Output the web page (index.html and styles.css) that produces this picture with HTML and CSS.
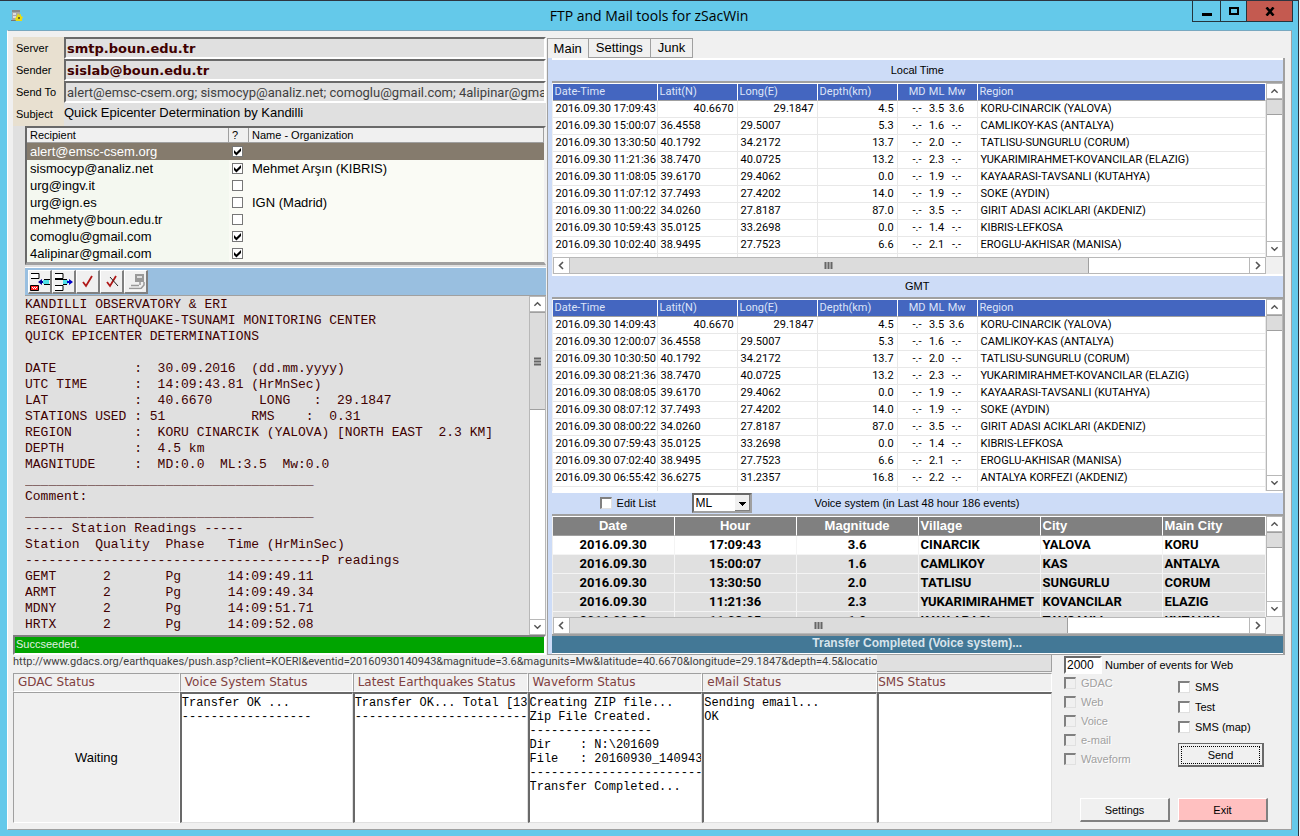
FILE: index.html
```html
<!DOCTYPE html>
<html lang="en">
<head>
<meta charset="utf-8">
<title>FTP and Mail tools for zSacWin</title>
<link rel="stylesheet" href="styles.css">
</head>
<body>
<svg class="defs" width="0" height="0" aria-hidden="true">
  <symbol id="up" viewBox="0 0 9 9"><path d="M1 6.5 4.5 3 8 6.5" fill="none" stroke="#555" stroke-width="1.6"/></symbol>
  <symbol id="down" viewBox="0 0 9 9"><path d="M1 2.5 4.5 6 8 2.5" fill="none" stroke="#555" stroke-width="1.6"/></symbol>
  <symbol id="left" viewBox="0 0 9 9"><path d="M6 1 2.500 4.500 6 8" fill="none" stroke="#555" stroke-width="1.6"/></symbol>
  <symbol id="right" viewBox="0 0 9 9"><path d="M3 1 6.500 4.500 3 8" fill="none" stroke="#555" stroke-width="1.6"/></symbol>
  <symbol id="grip" viewBox="0 0 9 9"><path d="M1 1.500H8M1 4.500H8M1 7.500H8" stroke="#666" stroke-width="2"/></symbol>
</svg>
<div class="window">
  <header class="titlebar">
    <svg class="app-icon" width="12" height="13" viewBox="0 0 12 13"><path d="M1 1h8v10H1z" fill="#a8a8a8"/><path d="M1 1h8v2H1z" fill="#888"/><path d="M2 4h3v2H2zM2 7h3v2H2z" fill="#ddd"/><path d="M0 11h6v1H0z" fill="#777"/><path d="M7 4l1 2 2-1v2l2 1-1 2v2H5l-1-2 1-2 1-1z" fill="#e8dc10"/><path d="M7 8h2v2H7z" fill="#777020"/></svg>
    <h1>FTP and Mail tools for zSacWin</h1>
    <div class="caption">
      <button class="cap min" aria-label="Minimize"><svg width="10" height="9" viewBox="0 0 10 9"><path d="M0 6h10v3H0z"/></svg></button>
      <button class="cap max" aria-label="Maximize"><svg width="10" height="8" viewBox="0 0 10 8"><path d="M1 1h8v6H1z" fill="none" stroke="#000" stroke-width="2"/></svg></button>
      <button class="cap close" aria-label="Close"><svg width="10" height="9" viewBox="0 0 10 9"><path d="M1.500 0.500l7 8M8.500 0.500l-7 8" stroke="#000" stroke-width="2.600"/></svg></button>
    </div>
  </header>
  <main class="client">
    <div class="upper">
      <section class="mail">
        <div class="fields">
          <label for="server">Server</label><input id="server" class="field strong" value="smtp.boun.edu.tr">
          <label for="sender">Sender</label><input id="sender" class="field strong" value="sislab@boun.edu.tr">
          <label for="sendto">Send To</label><input id="sendto" class="field narrow" value="alert@emsc-csem.org; sismocyp@analiz.net; comoglu@gmail.com; 4alipinar@gmail.com">
          <label for="subject">Subject</label><input id="subject" class="field plain" value="Quick Epicenter Determination by Kandilli">
        </div>
        <div class="mail-body">
          <div class="recipients">
            <table>
              <colgroup><col class="r-mail"><col class="r-on"><col></colgroup>
              <thead><tr><th>Recipient</th><th>?</th><th>Name - Organization</th></tr></thead>
              <tbody>
                <tr class="selected"><td>alert@emsc-csem.org</td><td><input type="checkbox" class="tick" aria-label="alert@emsc-csem.org" checked></td><td></td></tr>
                <tr><td>sismocyp@analiz.net</td><td><input type="checkbox" class="tick" aria-label="sismocyp@analiz.net" checked></td><td>Mehmet Arşın (KIBRIS)</td></tr>
                <tr><td>urg@ingv.it</td><td><input type="checkbox" class="tick" aria-label="urg@ingv.it"></td><td></td></tr>
                <tr><td>urg@ign.es</td><td><input type="checkbox" class="tick" aria-label="urg@ign.es"></td><td>IGN (Madrid)</td></tr>
                <tr><td>mehmety@boun.edu.tr</td><td><input type="checkbox" class="tick" aria-label="mehmety@boun.edu.tr"></td><td></td></tr>
                <tr><td>comoglu@gmail.com</td><td><input type="checkbox" class="tick" aria-label="comoglu@gmail.com" checked></td><td></td></tr>
                <tr><td>4alipinar@gmail.com</td><td><input type="checkbox" class="tick" aria-label="4alipinar@gmail.com" checked></td><td></td></tr>
              </tbody>
            </table>
          </div>
          <div class="toolbar">
            <button class="tool" aria-label="Insert recipient"><svg width="20" height="20" viewBox="0 0 20 20"><path d="M1 1.500h8v5H1" fill="#fff" stroke="#000"/><path d="M.5 13.500h8v5h-8z" fill="#f22" stroke="#000"/><path d="M2 15h1v1H2zM4 15h1v1H4zM6 15h1v1H6zM3 16h1v1H3zM5 16h1v1H5z" fill="#fff"/><path d="M8 10l4-3v2h2v2h-2v2z" fill="#00009a"/><path d="M14 7.500h6M14 12.500h6" stroke="#000"/><path d="M13 8h6v4h-6z" fill="#4fdfe6"/></svg></button>
            <button class="tool" aria-label="Remove recipient"><svg width="20" height="20" viewBox="0 0 20 20"><path d="M1 1.500h8v5H1M1 13.500h8v5H1" fill="#fff" stroke="#000"/><path d="M1 7.500h12M9 12.500h4" stroke="#000"/><path d="M9 8h5v4H9z" fill="#4fdfe6"/><path d="M19 10l-4-3v2h-2v2h2v2z" fill="#0000c8"/></svg></button>
            <button class="tool" aria-label="Check all"><svg width="18" height="18" viewBox="0 0 18 18"><path d="M4 9l3 4 6-10" fill="none" stroke="#b01818" stroke-width="1.800"/></svg></button>
            <button class="tool" aria-label="Uncheck all"><svg width="18" height="18" viewBox="0 0 18 18"><path d="M4 9l3 4 6-10" fill="none" stroke="#b01818" stroke-width="1.800"/><path d="M7 4l8 9" stroke="#222"/></svg></button>
            <button class="tool" aria-label="Print"><svg width="18" height="18" viewBox="0 0 18 18"><path d="M8 1h9v8H8z" fill="#999"/><path d="M10 3h5v2h-5z" fill="#ddd"/><path d="M13 9v3M2 15.500h12l3-3.500V9M4 12.500h8" fill="none" stroke="#999" stroke-width="1.500"/><path d="M2 17h13" stroke="#fff"/></svg></button>
          </div>
          <div class="report">
            <textarea readonly aria-label="Report">KANDILLI OBSERVATORY &amp; ERI
REGIONAL EARTHQUAKE-TSUNAMI MONITORING CENTER
QUICK EPICENTER DETERMINATIONS

DATE          :  30.09.2016  (dd.mm.yyyy)
UTC TIME      :  14:09:43.81 (HrMnSec)
LAT           :  40.6670      LONG   :  29.1847
STATIONS USED : 51           RMS    :  0.31
REGION        :  KORU CINARCIK (YALOVA) [NORTH EAST  2.3 KM]
DEPTH         :  4.5 km
MAGNITUDE     :  MD:0.0  ML:3.5  Mw:0.0
_____________________________________
Comment:
_____________________________________
----- Station Readings -----
Station  Quality  Phase   Time (HrMinSec)
--------------------------------------P readings
GEMT      2       Pg      14:09:49.11
ARMT      2       Pg      14:09:49.34
MDNY      2       Pg      14:09:51.71
HRTX      2       Pg      14:09:52.08</textarea>
            <div class="vbar tall"><svg class="arrow"><use href="#up"/></svg><div class="thumb"><svg><use href="#grip"/></svg></div><svg class="arrow end"><use href="#down"/></svg></div>
          </div>
        </div>
        <p class="success">Succseeded.</p>
      </section>

      <section class="lists">
        <nav class="tabs"><button class="tab active">Main</button><button class="tab">Settings</button><button class="tab">Junk</button></nav>
        <div class="page">
          <h2 class="band">Local Time</h2>
          <div class="grid local">
            <div class="view">
              <table class="quakes">
                <colgroup><col class="c-time"><col class="c-num"><col class="c-num"><col class="c-num"><col class="c-md"><col class="c-ml"><col class="c-mw"><col></colgroup>
                <thead><tr><th>Date-Time</th><th>Latit(N)</th><th>Long(E)</th><th>Depth(km)</th><th>MD</th><th>ML</th><th>Mw</th><th>Region</th></tr></thead>
                <tbody>
                  <tr class="latest"><td>2016.09.30 17:09:43</td><td>40.6670</td><td>29.1847</td><td>4.5</td><td>-.-</td><td>3.5</td><td>3.6</td><td>KORU-CINARCIK (YALOVA)</td></tr>
                  <tr><td>2016.09.30 15:00:07</td><td>36.4558</td><td>29.5007</td><td>5.3</td><td>-.-</td><td>1.6</td><td>-.-</td><td>CAMLIKOY-KAS (ANTALYA)</td></tr>
                  <tr><td>2016.09.30 13:30:50</td><td>40.1792</td><td>34.2172</td><td>13.7</td><td>-.-</td><td>2.0</td><td>-.-</td><td>TATLISU-SUNGURLU (CORUM)</td></tr>
                  <tr><td>2016.09.30 11:21:36</td><td>38.7470</td><td>40.0725</td><td>13.2</td><td>-.-</td><td>2.3</td><td>-.-</td><td>YUKARIMIRAHMET-KOVANCILAR (ELAZIG)</td></tr>
                  <tr><td>2016.09.30 11:08:05</td><td>39.6170</td><td>29.4062</td><td>0.0</td><td>-.-</td><td>1.9</td><td>-.-</td><td>KAYAARASI-TAVSANLI (KUTAHYA)</td></tr>
                  <tr><td>2016.09.30 11:07:12</td><td>37.7493</td><td>27.4202</td><td>14.0</td><td>-.-</td><td>1.9</td><td>-.-</td><td>SOKE (AYDIN)</td></tr>
                  <tr><td>2016.09.30 11:00:22</td><td>34.0260</td><td>27.8187</td><td>87.0</td><td>-.-</td><td>3.5</td><td>-.-</td><td>GIRIT ADASI ACIKLARI (AKDENIZ)</td></tr>
                  <tr><td>2016.09.30 10:59:43</td><td>35.0125</td><td>33.2698</td><td>0.0</td><td>-.-</td><td>1.4</td><td>-.-</td><td>KIBRIS-LEFKOSA</td></tr>
                  <tr><td>2016.09.30 10:02:40</td><td>38.9495</td><td>27.7523</td><td>6.6</td><td>-.-</td><td>2.1</td><td>-.-</td><td>EROGLU-AKHISAR (MANISA)</td></tr>
                  <tr><td></td><td></td><td></td><td></td><td></td><td></td><td></td><td></td></tr>
                </tbody>
              </table>
            </div>
            <div class="vbar"><svg class="arrow"><use href="#up"/></svg><div class="thumb"></div><svg class="arrow end"><use href="#down"/></svg></div>
            <div class="hbar wide"><svg class="arrow"><use href="#left"/></svg><div class="thumb"><svg><use href="#grip"/></svg></div><svg class="arrow end"><use href="#right"/></svg></div>
          </div>
          <h2 class="band">GMT</h2>
          <div class="grid gmt">
            <div class="view">
              <table class="quakes">
                <colgroup><col class="c-time"><col class="c-num"><col class="c-num"><col class="c-num"><col class="c-md"><col class="c-ml"><col class="c-mw"><col></colgroup>
                <thead><tr><th>Date-Time</th><th>Latit(N)</th><th>Long(E)</th><th>Depth(km)</th><th>MD</th><th>ML</th><th>Mw</th><th>Region</th></tr></thead>
                <tbody>
                  <tr class="latest"><td>2016.09.30 14:09:43</td><td>40.6670</td><td>29.1847</td><td>4.5</td><td>-.-</td><td>3.5</td><td>3.6</td><td>KORU-CINARCIK (YALOVA)</td></tr>
                  <tr><td>2016.09.30 12:00:07</td><td>36.4558</td><td>29.5007</td><td>5.3</td><td>-.-</td><td>1.6</td><td>-.-</td><td>CAMLIKOY-KAS (ANTALYA)</td></tr>
                  <tr><td>2016.09.30 10:30:50</td><td>40.1792</td><td>34.2172</td><td>13.7</td><td>-.-</td><td>2.0</td><td>-.-</td><td>TATLISU-SUNGURLU (CORUM)</td></tr>
                  <tr><td>2016.09.30 08:21:36</td><td>38.7470</td><td>40.0725</td><td>13.2</td><td>-.-</td><td>2.3</td><td>-.-</td><td>YUKARIMIRAHMET-KOVANCILAR (ELAZIG)</td></tr>
                  <tr><td>2016.09.30 08:08:05</td><td>39.6170</td><td>29.4062</td><td>0.0</td><td>-.-</td><td>1.9</td><td>-.-</td><td>KAYAARASI-TAVSANLI (KUTAHYA)</td></tr>
                  <tr><td>2016.09.30 08:07:12</td><td>37.7493</td><td>27.4202</td><td>14.0</td><td>-.-</td><td>1.9</td><td>-.-</td><td>SOKE (AYDIN)</td></tr>
                  <tr><td>2016.09.30 08:00:22</td><td>34.0260</td><td>27.8187</td><td>87.0</td><td>-.-</td><td>3.5</td><td>-.-</td><td>GIRIT ADASI ACIKLARI (AKDENIZ)</td></tr>
                  <tr><td>2016.09.30 07:59:43</td><td>35.0125</td><td>33.2698</td><td>0.0</td><td>-.-</td><td>1.4</td><td>-.-</td><td>KIBRIS-LEFKOSA</td></tr>
                  <tr><td>2016.09.30 07:02:40</td><td>38.9495</td><td>27.7523</td><td>6.6</td><td>-.-</td><td>2.1</td><td>-.-</td><td>EROGLU-AKHISAR (MANISA)</td></tr>
                  <tr><td>2016.09.30 06:55:42</td><td>36.6275</td><td>31.2357</td><td>16.8</td><td>-.-</td><td>2.2</td><td>-.-</td><td>ANTALYA KORFEZI (AKDENIZ)</td></tr>
                  <tr><td></td><td></td><td></td><td></td><td></td><td></td><td></td><td></td></tr>
                </tbody>
              </table>
            </div>
            <div class="vbar"><svg class="arrow"><use href="#up"/></svg><div class="thumb"></div><svg class="arrow end"><use href="#down"/></svg></div>
          </div>
          <div class="band tools">
            <label class="check"><input type="checkbox" class="sunken">Edit List</label>
            <span class="combo"><select aria-label="Magnitude type"><option>ML</option></select></span>
            <span>Voice system (in Last 48 hour 186 events)</span>
          </div>
          <div class="grid speech">
            <div class="view">
              <table class="voice">
                <colgroup><col class="c-v"><col class="c-v"><col class="c-v"><col class="c-v"><col class="c-v"><col></colgroup>
                <thead><tr><th>Date</th><th>Hour</th><th>Magnitude</th><th>Village</th><th>City</th><th>Main City</th></tr></thead>
                <tbody>
                  <tr class="latest"><td>2016.09.30</td><td>17:09:43</td><td>3.6</td><td>CINARCIK</td><td>YALOVA</td><td>KORU</td></tr>
                  <tr><td>2016.09.30</td><td>15:00:07</td><td>1.6</td><td>CAMLIKOY</td><td>KAS</td><td>ANTALYA</td></tr>
                  <tr><td>2016.09.30</td><td>13:30:50</td><td>2.0</td><td>TATLISU</td><td>SUNGURLU</td><td>CORUM</td></tr>
                  <tr><td>2016.09.30</td><td>11:21:36</td><td>2.3</td><td>YUKARIMIRAHMET</td><td>KOVANCILAR</td><td>ELAZIG</td></tr>
                  <tr><td>2016.09.30</td><td>11:08:05</td><td>1.9</td><td>KAYAARASI</td><td>TAVSANLI</td><td>KUTAHYA</td></tr>
                </tbody>
              </table>
            </div>
            <div class="vbar"><svg class="arrow"><use href="#up"/></svg><div class="thumb"></div><svg class="arrow end"><use href="#down"/></svg></div>
            <div class="hbar"><svg class="arrow"><use href="#left"/></svg><div class="thumb"><svg><use href="#grip"/></svg></div><svg class="arrow end"><use href="#right"/></svg></div>
          </div>
          <p class="transfer">Transfer Completed (Voice system)...</p>
        </div>
      </section>
    </div>

    <div class="lower">
      <div class="states">
        <p class="url">http://www.gdacs.org/earthquakes/push.asp?client=KOERI&amp;eventid=20160930140943&amp;magnitude=3.6&amp;magunits=Mw&amp;latitude=40.6670&amp;longitude=29.1847&amp;depth=4.5&amp;location=KOERI</p>
        <div class="filler"></div>
        <section class="state"><h3>GDAC Status</h3><p class="waiting">Waiting</p></section>
        <section class="state"><h3><label for="log-voice">Voice System Status</label></h3><textarea id="log-voice" readonly>Transfer OK ...
------------------</textarea></section>
        <section class="state"><h3><label for="log-latest">Latest Earthquakes Status</label></h3><textarea id="log-latest" readonly>Transfer OK... Total [13
------------------------</textarea></section>
        <section class="state"><h3><label for="log-wave">Waveform Status</label></h3><textarea id="log-wave" readonly>Creating ZIP file...
Zip File Created.
-----------------
Dir    : N:\201609
File   : 20160930_140943
------------------------
Transfer Completed...</textarea></section>
        <section class="state"><h3><label for="log-mail">eMail Status</label></h3><textarea id="log-mail" readonly>Sending email...
OK</textarea></section>
        <section class="state"><h3><label for="log-sms">SMS Status</label></h3><textarea id="log-sms" readonly></textarea></section>
      </div>
      <form class="controls">
        <div class="count"><input id="count" value="2000"><label for="count">Number of events for Web</label></div>
        <div class="options">
          <div class="targets">
            <label class="check"><input type="checkbox" class="sunken" disabled>GDAC</label>
            <label class="check"><input type="checkbox" class="sunken" disabled>Web</label>
            <label class="check"><input type="checkbox" class="sunken" disabled>Voice</label>
            <label class="check"><input type="checkbox" class="sunken" disabled>e-mail</label>
            <label class="check"><input type="checkbox" class="sunken" disabled>Waveform</label>
          </div>
          <div class="messages">
            <label class="check"><input type="checkbox" class="sunken">SMS</label>
            <label class="check"><input type="checkbox" class="sunken">Test</label>
            <label class="check"><input type="checkbox" class="sunken">SMS (map)</label>
            <button type="button" class="push send"><span>Send</span></button>
          </div>
        </div>
        <div class="actions"><button type="button" class="push">Settings</button><button type="button" class="push exit">Exit</button></div>
      </form>
    </div>
  </main>
</div>
</body>
</html>
```
FILE: styles.css
```css
* { box-sizing: border-box; }
body {
  margin: 0;
  min-height: 100vh;
  display: flex;
  padding-right: 1px;
  background: #f0f0f0;
  font: 12px/16px "Liberation Sans", sans-serif;
  color: #000;
}
h1, h2, h3, p { margin: 0; font-weight: normal; }
input, textarea, select, button { font: inherit; color: inherit; border-radius: 0; margin: 0; }
table { width: 100%; border-collapse: separate; border-spacing: 0; table-layout: fixed; }
th, td { padding: 0; text-align: left; font-weight: inherit; white-space: nowrap; }
.defs { position: absolute; }

.window {
  flex: 1;
  min-width: 0;
  display: flex;
  flex-direction: column;
  background: #64c9ea;
  border-top: 1px solid #2d3540;
  border-right: 1px solid #2d3540;
}
.titlebar {
  flex: 0 0 29px;
  display: grid;
  grid-template-columns: 1fr auto 1fr;
}
.app-icon { margin: 8px 0 0 11px; }
.titlebar h1 { font: 14px/29px "Open Sans", sans-serif; }
.caption { display: flex; height: 21px; justify-self: end; margin-right: 5px; }
.cap {
  display: flex;
  align-items: center;
  justify-content: center;
  width: 28px;
  padding: 0;
  background: none;
  border: 1px solid #24343c;
  border-top: 0;
  border-right: 0;
}
.cap.max { width: 26px; }
.cap.close { width: 47px; background: #c45a50; border-right: 1px solid #24343c; }

.client {
  flex: 1;
  display: flex;
  flex-direction: column;
  margin: 0 6px 6px 7px;
  padding: 6px 6px 6px 5px;
  background: #f0f0f0;
  border: 1px solid #fff;
  border-top-color: #78a8c0;
  border-right-color: #a0a0a0;
  border-bottom-color: #a0a0a0;
}
.upper {
  flex: 1 1 618px;
  display: grid;
  grid-template-columns: minmax(0, 533fr) minmax(0, 739fr);
  gap: 1px;
}

/* Mail side */
.mail { display: flex; flex-direction: column; background: #e0e0e0; }
.fields { display: grid; grid-template-columns: 51px 1fr; }
.fields label { padding: 3px 0 0 3px; background: #e8e0d0; font-size: 11px; }
.field {
  width: 100%;
  height: 22px;
  padding: 0 0 0 1px;
  background: #e0e0e0;
  border: 2px solid #696969;
  border-right-color: #fff;
  border-bottom-color: #fff;
  font-size: 13px;
  color: #404040;
  outline: 0;
}
.field.strong { font: bold 13px "DejaVu Sans", sans-serif; color: #400000; }
.field.narrow { font-family: Roboto, sans-serif; }
.field.plain { height: 23px; padding: 0 0 4px; border: 0; color: #000; }
.mail-body { flex: 1; display: flex; flex-direction: column; margin-left: 12px; }
.recipients {
  border: 2px solid #696969;
  border-right-color: #f0f0f0;
  border-bottom: 3px solid #a0a0a0;
  background: #fafbf5;
  font-size: 13px;
}
.recipients .r-mail { width: 202px; }
.recipients .r-on { width: 20px; }
.recipients th {
  height: 15px;
  padding-left: 3px;
  background: #f0f0f0;
  border-right: 1px solid #a0a0a0;
  border-bottom: 1px solid #a0a0a0;
  font-size: 11px;
  line-height: 14px;
}
.recipients td { height: 17px; padding-left: 3px; line-height: 17px; }
.recipients td:first-child { background: #f4f8f0; }
.recipients .selected td { background: #857b6d; color: #fff; }
.tick {
  appearance: none;
  display: block;
  width: 11px;
  height: 11px;
  background: #fff;
  border: 1px solid #777;
}
.tick:checked::before {
  content: "";
  display: block;
  height: 9px;
  background: #000;
  clip-path: polygon(11% 33%, 38% 60%, 89% 11%, 89% 44%, 38% 94%, 11% 66%);
}
.toolbar {
  display: flex;
  height: 29px;
  margin-top: 2px;
  padding: 2px 2px 2px 3px;
  background: #99bfe0;
  border-top: 1px solid #fff;
  border-bottom: 1px solid #a0a0a0;
}
.tool {
  display: flex;
  align-items: center;
  justify-content: center;
  width: 24px;
  height: 24px;
  padding: 0;
  background: #f0f0f0;
  border: 1px solid #fff;
  border-right: 2px solid #808080;
  border-bottom: 2px solid #808080;
}
.tool svg { flex: none; }
.report { flex: 1; display: flex; }
.report textarea {
  flex: 1;
  min-width: 0;
  padding: 1px 0 0;
  border: 0;
  outline: 0;
  resize: none;
  overflow: hidden;
  background: #e0e0e0;
  color: #400000;
  font: 13px/16px "Liberation Mono", monospace;
  white-space: pre;
}
.success {
  height: 20px;
  padding-left: 1px;
  background: #00a400;
  border: 2px solid #808080;
  border-right-color: #fff;
  border-bottom-color: #fff;
  color: #e0f0e0;
  font-size: 11px;
  line-height: 14px;
}

/* Scroll bars */
.vbar, .hbar { display: flex; background: #fff; border: 1px solid #b8b8b8; }
.vbar { flex: 0 0 17px; flex-direction: column; }
.hbar { height: 17px; }
.arrow { flex: none; width: 15px; height: 15px; padding: 3px; border: 0 solid #b8b8b8; }
.vbar .arrow { border-bottom-width: 1px; }
.vbar .end { margin-top: auto; border-width: 1px 0 0; }
.hbar .arrow { width: 16px; border-right-width: 1px; }
.hbar .end { margin-left: auto; border-width: 0 0 0 1px; }
.thumb {
  display: flex;
  align-items: center;
  justify-content: center;
  height: 16px;
  background: #dcdcdc;
  border: 1px solid #a0a0a0;
  border-width: 1px 0;
}
.thumb svg { width: 9px; height: 9px; }
.tall .thumb { height: 98px; }
.hbar .thumb { width: 70%; height: 15px; border-width: 0 1px 0 0; }
.hbar.wide .thumb { width: 73%; }
.hbar .thumb svg { transform: rotate(90deg); }

/* Event lists */
.lists { display: flex; flex-direction: column; }
.tabs { display: flex; padding-top: 1px; }
.tab {
  height: 20px;
  padding: 0 7px;
  background: #f0f0f0;
  border: 1px solid #a0a0a0;
  border-left: 0;
  font-size: 13px;
  line-height: 18px;
}
.tab.active { padding: 0 6px; border-left: 1px solid #a0a0a0; border-bottom: 0; }
.page {
  flex: 1;
  display: flex;
  flex-direction: column;
  padding: 0 0 0 4px;
  background: #cddcf7;
  border: 1px solid #a0a0a0;
  border-right-width: 2px;
  border-top: 0;
}
.band {
  display: flex;
  align-items: center;
  justify-content: center;
  height: 25px;
  padding-bottom: 2px;
  background: #cddcf7;
  border-top: 2px solid #fff;
  border-bottom: 2px solid #a0a0a0;
  font-size: 11px;
}
.tools { justify-content: flex-start; padding: 0 0 0 48px; }
.tools .check { width: 92px; }
.combo { display: flex; width: 60px; margin-right: 63px; }
.combo select {
  width: 100%;
  height: 20px;
  padding: 0 0 0 2px;
  appearance: none;
  background: linear-gradient(#000, #000) 45px 7px / 7px 1px no-repeat,
    linear-gradient(#000, #000) 46px 8px / 5px 1px no-repeat,
    linear-gradient(#000, #000) 47px 9px / 3px 1px no-repeat,
    linear-gradient(#000, #000) 48px 10px / 1px 1px no-repeat,
    linear-gradient(#808080, #808080) 55px 0 / 1px 16px no-repeat,
    linear-gradient(#808080, #808080) 41px 15px / 15px 1px no-repeat,
    linear-gradient(#f0f0f0, #f0f0f0) 41px 0 / 15px 16px no-repeat #fff;
  border: 2px solid #696969;
  border-right-color: #a0a0a0;
  border-bottom-color: #a0a0a0;
  font-size: 12px;
}
.grid {
  display: grid;
  grid-template-columns: minmax(0, 1fr) 17px;
  grid-template-rows: minmax(0, 1fr) auto;
  padding-left: 1px;
  background: #f0f0f0;
}
.local { flex: 1 1 191px; }
.gmt { flex: 1 1 191px; }
.speech { flex: 1 1 118px; }
.view { height: 0; min-height: 100%; overflow: hidden; background: #fff; }
.quakes { font: 11px/16px Roboto, sans-serif; }
.c-time { width: 105px; }
.c-num { width: 80px; }
.c-md { width: 29px; }
.c-ml { width: 20px; }
.c-mw { width: 31px; }
.quakes th, .quakes td { height: 17px; padding: 0 3px; border: 1px solid #e8e8e8; border-width: 0 1px 1px 0; }
.quakes th { height: 18px; padding: 0 2px; background: #4466c0; color: #dde4f8; border: 1px solid #fff; border-width: 1px 1px 1px 0; border-bottom-color: #a0a0a0; }
.quakes td:nth-child(4), .quakes .latest td:nth-child(2), .quakes .latest td:nth-child(3) { text-align: right; }
.quakes :is(th, td):nth-child(5) { padding: 0 0 0 10px; border-right: 0; text-align: center; }
.quakes :is(th, td):nth-child(6) { padding: 0; border-right: 0; text-align: center; }
.quakes :is(th, td):nth-child(7) { padding: 0 10px 0 0; text-align: center; }
.voice { font-size: 13px; font-weight: bold; }
.c-v { width: 122px; }
.voice th, .voice td { height: 19px; line-height: 18px; padding: 0 2px; border: 1px solid #f4f4f4; border-width: 0 1px 1px 0; background: #e0e0e0; }
.voice td { font-family: Roboto, sans-serif; }
.voice th { height: 20px; background: #808080; color: #fff; border: 1px solid #fff; border-width: 1px 1px 1px 0; border-bottom-color: #a0a0a0; }
.voice .latest td { background: #fff; }
.voice :is(th, td):nth-child(-n+3) { text-align: center; }
.transfer {
  height: 20px;
  background: #437896;
  border: 2px solid #a0a0a0;
  border-width: 2px 0 1px;
  border-bottom-color: #fff;
  color: #d8e4ec;
  font-size: 12px;
  font-weight: bold;
  line-height: 15px;
  text-align: center;
}

/* Status area */
.lower { flex: 0 0 168px; display: grid; grid-template-columns: minmax(0, 1039fr) minmax(0, 233fr); }
.states {
  display: grid;
  grid-template-columns: minmax(0, 167fr) minmax(0, 173fr) repeat(4, minmax(0, 175fr));
  grid-template-rows: 18px 1fr;
}
.url { grid-column: 1 / 6; overflow: hidden; white-space: nowrap; color: #404040; font: 11px/14px Roboto, sans-serif; }
.filler { margin-bottom: 1px; background: #e0e0e0; border-right: 1px solid #a0a0a0; border-bottom: 1px solid #a0a0a0; }
.state { display: flex; flex-direction: column; min-width: 0; }
.state h3 {
  height: 19px;
  padding-left: 4px;
  border: 1px solid #a0a0a0;
  border-right-color: #fff;
  border-bottom-color: #fff;
  white-space: nowrap;
  color: #804040;
  font: 12px/16px "DejaVu Sans", sans-serif;
}
.state:last-child h3 { padding-left: 0; }
.state textarea {
  flex: 1;
  width: 100%;
  padding: 2px 0 0;
  border: 2px solid #696969;
  border-right: 1px solid #e0e0e0;
  border-bottom: 1px solid #e0e0e0;
  outline: 0;
  resize: none;
  overflow: hidden;
  background: #fff;
  font: 12px/14px "Liberation Mono", monospace;
  white-space: pre;
}
.waiting {
  flex: 1;
  display: flex;
  align-items: center;
  justify-content: center;
  border: 1px solid #a0a0a0;
  border-right-color: #fff;
  border-bottom-color: #fff;
  font-size: 13px;
}

/* Controls */
.controls { display: flex; flex-direction: column; padding: 1px 10px 1px 12px; font-size: 11px; }
.count { display: flex; align-items: center; gap: 3px; white-space: nowrap; }
.count input { width: 38px; height: 18px; padding: 0 1px; border: 2px solid #696969; border-right-color: #fff; border-bottom-color: #fff; outline: 0; font-size: 12px; }
.options { display: flex; padding-top: 1px; }
.targets { flex: 1; display: flex; flex-direction: column; gap: 3px; }
.messages { display: flex; flex-direction: column; gap: 4px; width: 97px; padding-top: 4px; }
.check { display: flex; align-items: center; gap: 5px; white-space: nowrap; }
.targets .check { color: #a0a0a0; text-shadow: 1px 1px #fff; }
.sunken {
  appearance: none;
  flex: none;
  width: 12px;
  height: 12px;
  background: #fff;
  border: 1px solid #e0e0e0;
  border-top: 2px solid #808080;
  border-left: 2px solid #808080;
}
.sunken:disabled { background: #f0f0f0; }
.push {
  width: 90px;
  height: 24px;
  padding: 0;
  background: #f0f0f0;
  border: 1px solid #fff;
  border-right: 2px solid #808080;
  border-bottom: 2px solid #808080;
}
.send { width: 86px; margin-top: 4px; padding: 2px; border: 1px solid #696969; border-right-width: 2px; border-bottom-width: 2px; }
.send span { display: block; border: 1px dotted #000; }
.actions { display: flex; justify-content: flex-end; gap: 8px; margin-top: auto; padding-right: 7px; }
.exit { background: #ffc0c0; }
```
